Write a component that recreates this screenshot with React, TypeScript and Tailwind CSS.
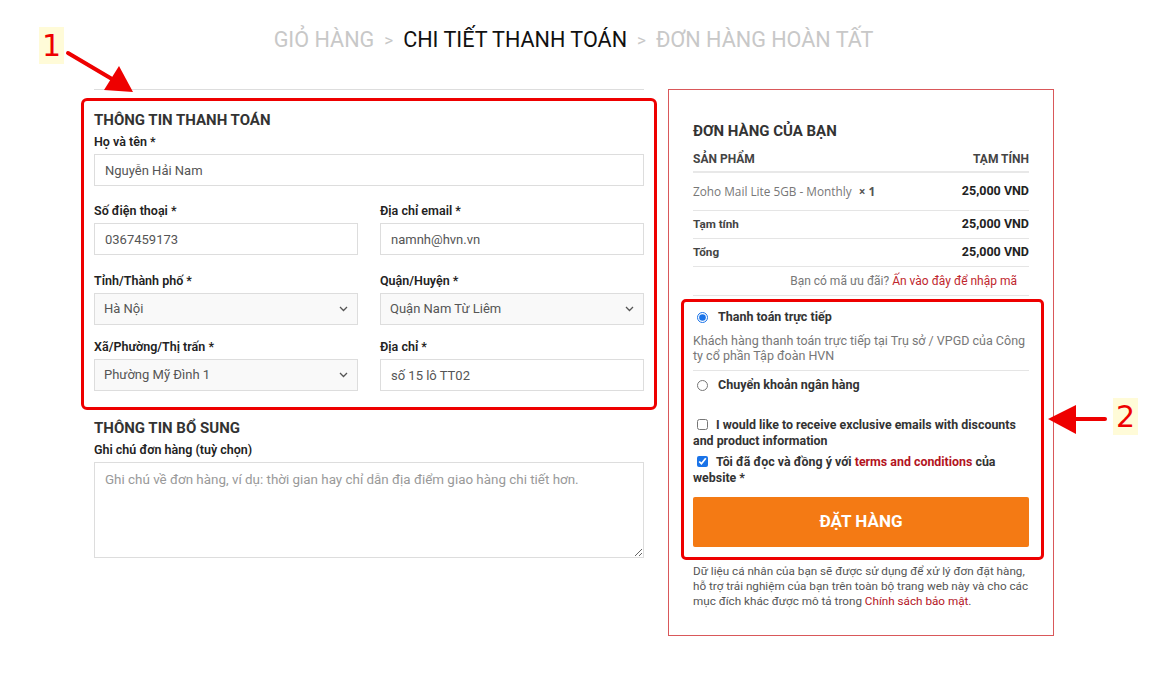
import React from 'react';

const font = { fontFamily: 'Roboto, "Noto Sans", Arial, sans-serif' };

const Label: React.FC<{ text: string }> = ({ text }) => (
  <div className="text-[12.5px] leading-[18px] font-semibold text-[#222]">{text}</div>
);

const TextField: React.FC<{ label: string; value: string; className?: string }> = ({ label, value, className }) => (
  <div className={className}>
    <Label text={label} />
    <input
      readOnly
      value={value}
      className="mt-[3px] w-full h-[32px] border border-[#ddd] bg-white px-[10px] text-[13px] text-[#555] outline-none"
      style={font}
    />
  </div>
);

const SelectField: React.FC<{ label: string; value: string; className?: string }> = ({ label, value, className }) => (
  <div className={className}>
    <Label text={label} />
    <div className="relative mt-[3px]">
      <select
        value={value}
        onChange={() => {}}
        className="appearance-none w-full h-[32px] border border-[#ddd] bg-[#f9f9f9] px-[9px] text-[13px] text-[#555] outline-none"
        style={font}
      >
        <option>{value}</option>
      </select>
      <svg className="absolute right-[10px] top-[13px]" width="9" height="6" viewBox="0 0 9 6">
        <path d="M1 1l3.5 3.5L8 1" fill="none" stroke="#555" strokeWidth="1.3" />
      </svg>
    </div>
  </div>
);

const Row: React.FC<{ left: React.ReactNode; right: React.ReactNode; className: string }> = ({ left, right, className }) => (
  <div className={`flex items-center justify-between border-b border-[#e5e5e5] ${className}`}>
    {left}
    {right}
  </div>
);

export default function App() {
  return (
    <div className="relative w-[1172px] h-[697px] bg-white overflow-hidden" style={font}>
      {/* breadcrumb */}
      <div className="ml-[94px] w-[959px] pt-[25px] flex justify-center items-center text-[21.6px] leading-[30px] text-[#c8c8c8] gap-[10px]">
        <span>GIỎ HÀNG</span>
        <span className="text-[17px]">&gt;</span>
        <span className="text-[#111]">CHI TIẾT THANH TOÁN</span>
        <span className="text-[17px]">&gt;</span>
        <span>ĐƠN HÀNG HOÀN TẤT</span>
      </div>

      <div className="ml-[94px] mt-[34px] flex gap-[24px]">
        {/* left column */}
        <div className="w-[550px] border-t border-[#ddd]">
          <h3 className="mt-[20px] text-[15px] leading-[20px] font-bold text-[#333]">THÔNG TIN THANH TOÁN</h3>
          <TextField className="mt-[3px]" label="Họ và tên *" value="Nguyễn Hải Nam" />
          <div className="mt-[16px] grid grid-cols-2 gap-x-[22px]">
            <TextField label="Số điện thoại *" value="0367459173" />
            <TextField label="Địa chỉ email *" value="namnh@hvn.vn" />
          </div>
          <div className="mt-[17px] grid grid-cols-2 gap-x-[22px]">
            <SelectField label="Tỉnh/Thành phố *" value="Hà Nội" />
            <SelectField label="Quận/Huyện *" value="Quận Nam Từ Liêm" />
          </div>
          <div className="mt-[13px] grid grid-cols-2 gap-x-[22px]">
            <SelectField label="Xã/Phường/Thị trấn *" value="Phường Mỹ Đình 1" />
            <TextField label="Địa chỉ *" value="số 15 lô TT02" />
          </div>
          <h3 className="mt-[27px] text-[15px] leading-[20px] font-bold text-[#333]">THÔNG TIN BỔ SUNG</h3>
          <div className="mt-[3px]">
            <Label text="Ghi chú đơn hàng (tuỳ chọn)" />
          </div>
          <textarea
            readOnly
            placeholder="Ghi chú về đơn hàng, ví dụ: thời gian hay chỉ dẫn địa điểm giao hàng chi tiết hơn."
            className="mt-[3px] block w-full h-[96px] border border-[#ddd] px-[10px] py-[8px] text-[13.4px] leading-[18px] placeholder:text-[#999] outline-none"
            style={font}
          />
        </div>

        {/* right column */}
        <div className="w-[386px] h-[547px] border border-[#d9585a] px-[24px] pt-[31px]">
          <h3 className="text-[15px] leading-[20px] font-bold text-[#333]">ĐƠN HÀNG CỦA BẠN</h3>
          <div className="mt-[10px] flex justify-between border-b-[2px] border-[#e8e8e8] pb-[4px] text-[12px] leading-[16px] font-bold text-[#444]">
            <span>SẢN PHẨM</span>
            <span>TẠM TÍNH</span>
          </div>
          <Row
            className="h-[38px]"
            left={
              <span className="text-[11.8px] text-[#777]" style={{ fontFamily: '"Open Sans", Roboto, sans-serif' }}>
                Zoho Mail Lite 5GB - Monthly <b className="ml-[4px] text-[#555]">× 1</b>
              </span>
            }
            right={<span className="text-[12.5px] font-bold text-[#222]">25,000 VND</span>}
          />
          <Row
            className="h-[28px]"
            left={<span className="text-[11.7px] font-bold text-[#444]">Tạm tính</span>}
            right={<span className="text-[12.5px] font-bold text-[#222]">25,000 VND</span>}
          />
          <Row
            className="h-[28px]"
            left={<span className="text-[11.7px] font-bold text-[#444]">Tổng</span>}
            right={<span className="text-[12.5px] font-bold text-[#222]">25,000 VND</span>}
          />
          <div className="h-[29px] flex items-center justify-end pr-[12px] border-b border-[#e5e5e5] text-[12px] text-[#777]">
            Bạn có mã ưu đãi?&nbsp;<span className="text-[#c0262d]">Ấn vào đây để nhập mã</span>
          </div>

          <div className="mt-[13px] flex items-center gap-[10px] pl-[4px] h-[16px]">
            <input type="radio" readOnly checked className="w-[11px] h-[11px] m-0 accent-[#1a73e8]" />
            <span className="text-[12.5px] font-bold text-[#333]">Thanh toán trực tiếp</span>
          </div>
          <p className="mt-[8px] text-[12.5px] leading-[15px] text-[#777] pb-[7px] border-b border-[#e5e5e5]">
            Khách hàng thanh toán trực tiếp tại Trụ sở / VPGD của Công ty cổ phần Tập đoàn HVN
          </p>
          <div className="mt-[6px] flex items-center gap-[10px] pl-[4px] h-[16px]">
            <input type="radio" readOnly checked={false} className="w-[11px] h-[11px] m-0" />
            <span className="text-[12.5px] font-bold text-[#333]">Chuyển khoản ngân hàng</span>
          </div>

          <p className="mt-[24px] text-[12.4px] leading-[16px] font-bold text-[#333]">
            <input type="checkbox" readOnly checked={false} className="w-[11px] h-[11px] ml-[4px] mr-[8px] align-[-1px]" />
            I would like to receive exclusive emails with discounts and product information
          </p>
          <p className="mt-[5px] text-[12.4px] leading-[16px] font-bold text-[#333]">
            <input type="checkbox" readOnly checked className="w-[11px] h-[11px] ml-[4px] mr-[8px] align-[-1px] accent-[#1a73e8]" />
            Tôi đã đọc và đồng ý với <span className="text-[#b3141e]">terms and conditions</span> của website *
          </p>

          <button className="mt-[11px] w-full h-[50px] rounded-[2px] bg-[#f47a14] text-white text-[17px] font-bold">
            ĐẶT HÀNG
          </button>

          <p className="mt-[17px] text-[11.7px] leading-[15px] text-[#555]">
            Dữ liệu cá nhân của bạn sẽ được sử dụng để xử lý đơn đặt hàng, hỗ trợ trải nghiệm của bạn trên toàn bộ trang web này và cho các mục đích khác được mô tả trong{' '}
            <span className="text-[#b3141e]">Chính sách bảo mật</span>.
          </p>
        </div>
      </div>

      {/* annotations */}
      <div className="absolute left-[81px] top-[98px] w-[576px] h-[312px] border-[3px] border-[#ee0000] rounded-[6px]" />
      <div className="absolute left-[681px] top-[299px] w-[363px] h-[261px] border-[3px] border-[#ee0000] rounded-[5px]" />
      <div className="absolute left-[39px] top-[27px] w-[25px] h-[37px] bg-[#fffbd8] text-[#ee0000] text-[30px] leading-[37px] text-center" style={{ fontFamily: '"DejaVu Sans", sans-serif' }}>
        1
      </div>
      <div className="absolute left-[1113px] top-[398px] w-[25px] h-[37px] bg-[#fffbd8] text-[#ee0000] text-[30px] leading-[37px] text-center" style={{ fontFamily: '"DejaVu Sans", sans-serif' }}>
        2
      </div>
      <svg className="absolute left-0 top-0 pointer-events-none" width="1172" height="697">
        <line x1="68" y1="53" x2="112" y2="79" stroke="#ee0000" strokeWidth="4" strokeLinecap="round" />
        <polygon points="133,92 104,90 119,66" fill="#ee0000" />
        <line x1="1105" y1="419" x2="1070" y2="419" stroke="#ee0000" strokeWidth="4" strokeLinecap="round" />
        <polygon points="1048,419 1076,405 1076,434" fill="#ee0000" />
      </svg>
    </div>
  );
}
